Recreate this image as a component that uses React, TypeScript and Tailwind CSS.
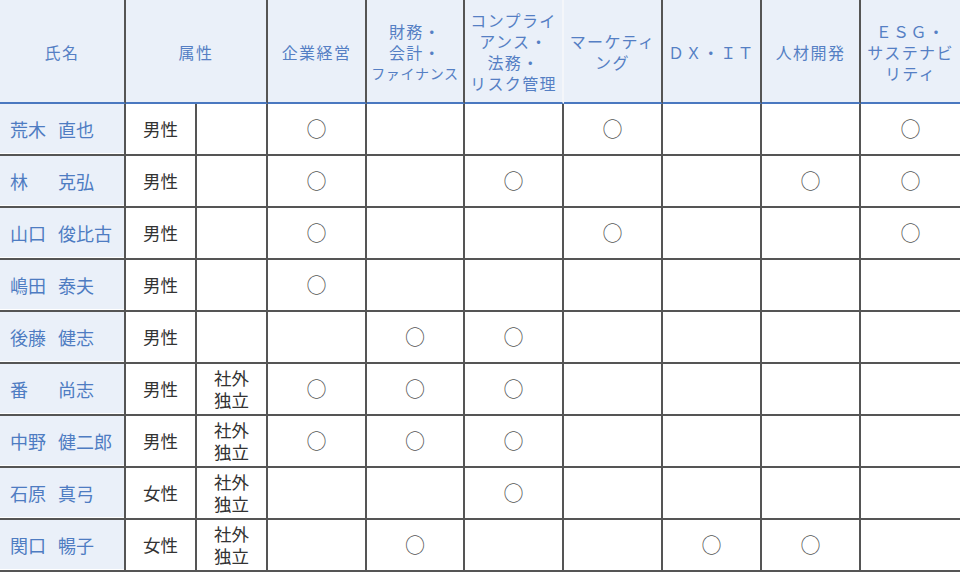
import React from "react";

type Row = {
  sur: string;
  given: string;
  gender: string;
  outside: boolean;
  marks: boolean[];
};

const rows: Row[] = [
  { sur: "荒木", given: "直也", gender: "男性", outside: false, marks: [true, false, false, true, false, false, true] },
  { sur: "林", given: "克弘", gender: "男性", outside: false, marks: [true, false, true, false, false, true, true] },
  { sur: "山口", given: "俊比古", gender: "男性", outside: false, marks: [true, false, false, true, false, false, true] },
  { sur: "嶋田", given: "泰夫", gender: "男性", outside: false, marks: [true, false, false, false, false, false, false] },
  { sur: "後藤", given: "健志", gender: "男性", outside: false, marks: [false, true, true, false, false, false, false] },
  { sur: "番", given: "尚志", gender: "男性", outside: true, marks: [true, true, true, false, false, false, false] },
  { sur: "中野", given: "健二郎", gender: "男性", outside: true, marks: [true, true, true, false, false, false, false] },
  { sur: "石原", given: "真弓", gender: "女性", outside: true, marks: [false, false, true, false, false, false, false] },
  { sur: "関口", given: "暢子", gender: "女性", outside: true, marks: [false, true, false, false, true, true, false] },
];

const font = { fontFamily: '"Noto Sans CJK JP", "Noto Sans", sans-serif' };

const H = "bg-[#eaf0f9] border-b-2 border-b-[#4a78c0] flex flex-col items-center justify-center pt-[2px] text-[#557fc4] text-[16px] leading-[21px] tracking-[1.4px] text-center";

export default function App() {
  return (
    <div className="w-[960px] h-[573px] bg-white overflow-hidden" style={font}>
      <div className="grid grid-cols-[126px_71px_71px_99px_98px_99px_99px_99px_99px_99px] grid-rows-[104px_repeat(9,52px)]">
        <div className={`${H} border-r-2 border-r-[#555]`}>氏名</div>
        <div className={`${H} col-span-2 border-r-2 border-r-[#555]`}>属性</div>
        <div className={`${H} border-r-2 border-r-[#555]`}>企業経営</div>
        <div className={`${H} border-r-2 border-r-[#555]`}>
          <span className="block">財務・</span>
          <span className="block">会計・</span>
          <span className="block text-[14px] tracking-[0.7px]">ファイナンス</span>
        </div>
        <div className={`${H} border-r-2 border-r-[#f4f6fa]`}>
          <span className="block">コンプライ</span>
          <span className="block">アンス・</span>
          <span className="block">法務・</span>
          <span className="block">リスク管理</span>
        </div>
        <div className={`${H} border-r-2 border-r-[#555]`}>
          <span className="block">マーケティ</span>
          <span className="block">ング</span>
        </div>
        <div className={`${H} border-r-2 border-r-[#555]`}>ＤＸ・ＩＴ</div>
        <div className={`${H} border-r-2 border-r-[#555]`}>人材開発</div>
        <div className={H}>
          <span className="block">ＥＳＧ・</span>
          <span className="block">サステナビ</span>
          <span className="block">リティ</span>
        </div>

        {rows.map((r, i) => (
          <React.Fragment key={i}>
            <div className="bg-[#eaf0f9] shadow-[inset_0_-1px_0_#ffffff] border-r-2 border-r-[#555] border-b-2 border-b-[#555] flex items-center pl-[10px] text-[18px] text-[#4e7cc2]">
              <span className="inline-block w-[48px]">{r.sur}</span>
              <span>{r.given}</span>
            </div>
            <div className="border-r-2 border-r-[#555] border-b-2 border-b-[#555] flex items-center justify-center text-[17.5px] text-[#333]">
              {r.gender}
            </div>
            <div className="border-r-2 border-r-[#555] border-b-2 border-b-[#555] flex flex-col items-center justify-center text-[17.5px] leading-[22px] text-[#333]">
              {r.outside ? (
                <>
                  <span className="block">社外</span>
                  <span className="block">独立</span>
                </>
              ) : null}
            </div>
            {r.marks.map((m, j) => (
              <div
                key={j}
                className={`border-b-2 border-b-[#555] flex items-center justify-center ${j < 6 ? "border-r-2 border-r-[#555]" : ""}`}
              >
                {m ? (
                  <span className="text-[20px] leading-none text-[#555]">○</span>
                ) : null}
              </div>
            ))}
          </React.Fragment>
        ))}
      </div>
    </div>
  );
}
